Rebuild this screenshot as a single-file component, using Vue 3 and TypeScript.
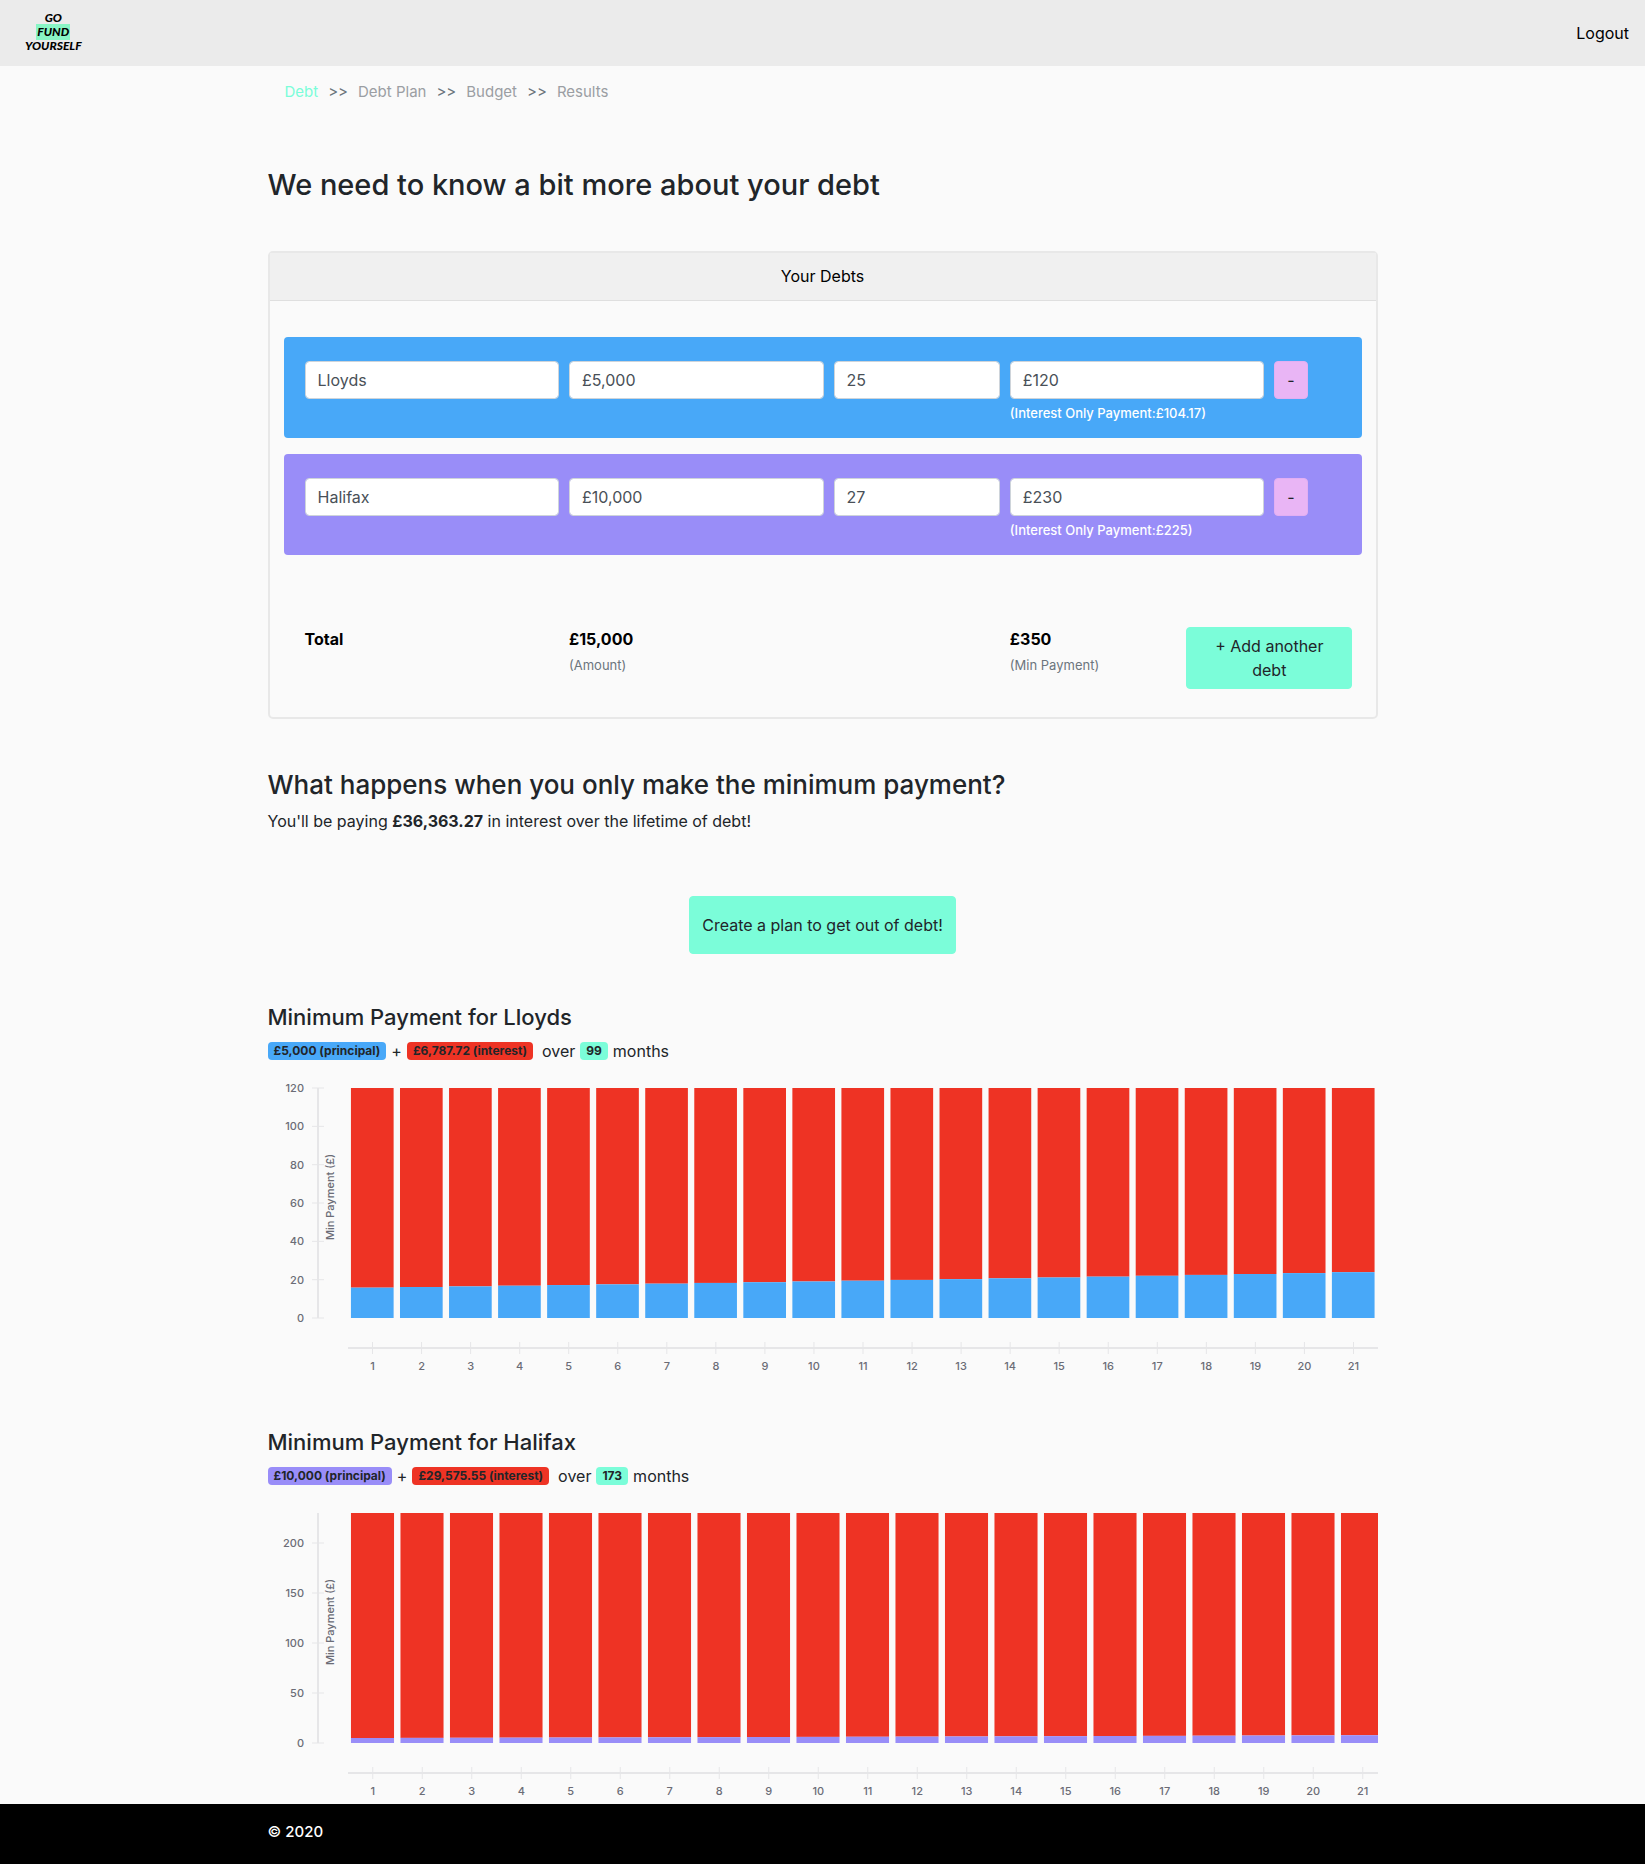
<script setup lang="ts">
import { computed, ref } from 'vue'

interface Debt {
  id: number
  name: string
  amount: string
  rate: string
  payment: string
  interestOnly: string
  color: string
}

interface Plan {
  id: number
  name: string
  principal: string
  interest: string
  months: number
  color: string
  balance: number
  annualRate: number
  payment: number
  tickStep: number
  // horizontal room given to each month in the chart
  pitch: number
}

const steps = ['Debt', 'Debt Plan', 'Budget', 'Results']

const debts = ref<Debt[]>([
  { id: 1, name: 'Lloyds', amount: '£5,000', rate: '25', payment: '£120', interestOnly: '£104.17', color: 'blue' },
  { id: 2, name: 'Halifax', amount: '£10,000', rate: '27', payment: '£230', interestOnly: '£225', color: 'purple' },
])

const plans: Plan[] = [
  { id: 1, name: 'Lloyds', principal: '£5,000', interest: '£6,787.72', months: 99, color: 'blue', balance: 5000, annualRate: 0.25, payment: 120, tickStep: 20, pitch: 1030 / 21 },
  { id: 2, name: 'Halifax', principal: '£10,000', interest: '£29,575.55', months: 173, color: 'purple', balance: 10000, annualRate: 0.27, payment: 230, tickStep: 50, pitch: 1039.5 / 21 },
]

const MONTHS = 21
const PLOT_LEFT = 80
const PLOT_TOP = 15
const PLOT_HEIGHT = 230
const PLOT_BOTTOM = PLOT_TOP + PLOT_HEIGHT
const AXIS_Y = PLOT_BOTTOM + 30

const charts = computed(() =>
  plans.map((plan) => {
    const scale = PLOT_HEIGHT / plan.payment
    const monthly = plan.annualRate / 12
    const first = plan.payment - plan.balance * monthly
    const bars = Array.from({ length: MONTHS }, (_, i) => {
      const height = first * Math.pow(1 + monthly, i) * scale
      return {
        month: i + 1,
        x: PLOT_LEFT + i * plan.pitch + plan.pitch * 0.06,
        width: plan.pitch * 0.87,
        center: PLOT_LEFT + (i + 0.5) * plan.pitch,
        split: PLOT_BOTTOM - height,
        height,
      }
    })
    const ticks: { value: number; y: number }[] = []
    for (let value = 0; value <= plan.payment; value += plan.tickStep) {
      ticks.push({ value, y: PLOT_BOTTOM - value * scale })
    }
    return { ...plan, bars, ticks }
  }),
)

function removeDebt(id: number) {
  debts.value = debts.value.filter((debt) => debt.id !== id)
}

function addDebt() {
  debts.value.push({
    id: Date.now(),
    name: '',
    amount: '',
    rate: '',
    payment: '',
    interestOnly: '£0',
    color: 'blue',
  })
}
</script>

<template>
  <div class="page">
    <header class="navbar">
      <a class="logo" href="#">
        <span>GO</span>
        <span class="logo-mark">FUND</span>
        <span>YOURSELF</span>
      </a>
      <a class="logout" href="#">Logout</a>
    </header>

    <main class="container">
      <nav class="steps" aria-label="Progress">
        <template v-for="(step, i) in steps" :key="step">
          <span v-if="i > 0" class="separator">&gt;&gt;</span>
          <a href="#" :class="['step', { active: i === 0 }]">{{ step }}</a>
        </template>
      </nav>

      <h1>We need to know a bit more about your debt</h1>

      <section class="card">
        <div class="card-header">Your Debts</div>
        <div class="card-body">
          <form v-for="debt in debts" :key="debt.id" :class="['debt', 'form-row', debt.color]" @submit.prevent>
            <input v-model="debt.name" class="field wide" type="text" aria-label="Name" />
            <input v-model="debt.amount" class="field wide" type="text" aria-label="Amount" />
            <input v-model="debt.rate" class="field narrow" type="text" aria-label="Interest rate" />
            <div class="wide">
              <input v-model="debt.payment" class="field" type="text" aria-label="Minimum payment" />
              <small class="hint">(Interest Only Payment:{{ debt.interestOnly }})</small>
            </div>
            <button class="remove" type="button" :aria-label="`Remove ${debt.name}`" @click="removeDebt(debt.id)">-</button>
          </form>

          <div class="totals form-row">
            <div class="wide"><strong>Total</strong></div>
            <div class="wide">
              <strong>£15,000</strong>
              <small>(Amount)</small>
            </div>
            <div class="narrow"></div>
            <div class="narrow">
              <strong>£350</strong>
              <small>(Min Payment)</small>
            </div>
            <button class="btn narrow" type="button" @click="addDebt">+ Add another debt</button>
          </div>
        </div>
      </section>

      <section class="summary">
        <h2>What happens when you only make the minimum payment?</h2>
        <p>You'll be paying <strong>£36,363.27</strong> in interest over the lifetime of debt!</p>
        <button class="btn create" type="button">Create a plan to get out of debt!</button>
      </section>

      <section v-for="chart in charts" :key="chart.id" class="plan">
        <h3>Minimum Payment for {{ chart.name }}</h3>
        <p class="breakdown">
          <span :class="['badge', chart.color]">{{ chart.principal }} (principal)</span>
          <span>+</span>
          <span class="badge red">{{ chart.interest }} (interest)</span>
          <span class="over">over</span>
          <span class="badge mint">{{ chart.months }}</span>
          <span>months</span>
        </p>
        <svg class="chart" viewBox="0 0 1110 306" role="img" :aria-label="`Minimum payment for ${chart.name}`">
          <g class="axis">
            <line class="axis-line" x1="50" x2="50" :y1="PLOT_TOP" :y2="PLOT_BOTTOM" />
            <g v-for="tick in chart.ticks" :key="tick.value">
              <line x1="44" x2="56" :y1="tick.y" :y2="tick.y" />
              <text x="36" :y="tick.y + 4" text-anchor="end">{{ tick.value }}</text>
            </g>
            <text transform="translate(66 124) rotate(-90)" text-anchor="middle">Min Payment (£)</text>
          </g>
          <g v-for="bar in chart.bars" :key="bar.month">
            <rect class="fill-red" :x="bar.x" :y="PLOT_TOP" :width="bar.width" :height="bar.split - PLOT_TOP" />
            <rect :class="`fill-${chart.color}`" :x="bar.x" :y="bar.split" :width="bar.width" :height="bar.height" />
          </g>
          <g class="axis">
            <line class="axis-line" :x1="PLOT_LEFT" x2="1110" :y1="AXIS_Y" :y2="AXIS_Y" />
            <g v-for="bar in chart.bars" :key="bar.month">
              <line :x1="bar.center" :x2="bar.center" :y1="AXIS_Y - 6" :y2="AXIS_Y + 6" />
              <text :x="bar.center" :y="AXIS_Y + 22" text-anchor="middle">{{ bar.month }}</text>
            </g>
          </g>
        </svg>
      </section>
    </main>

    <footer class="footer">
      <div class="container">© 2020</div>
    </footer>
  </div>
</template>

<style>
body {
  background: #fafafa;
}
</style>

<style scoped>
.page {
  min-height: 100vh;
  display: flex;
  flex-direction: column;
  font-family: Inter, 'Liberation Sans', sans-serif;
  font-size: 16px;
  line-height: 24px;
  color: #212529;
}

.page *,
.page {
  box-sizing: border-box;
}

h1,
h2,
h3,
p {
  margin: 0;
  font-weight: 500;
}

p {
  font-weight: 400;
}

a {
  text-decoration: none;
}

strong {
  font-weight: 700;
}

input,
button {
  font: inherit;
}

.navbar {
  display: flex;
  align-items: center;
  justify-content: space-between;
  height: 66px;
  padding: 0 16px 0 25px;
  background: #ebebeb;
}

.logo {
  display: flex;
  flex-direction: column;
  align-items: center;
  padding-bottom: 2px;
  font-family: Lato, sans-serif;
  font-size: 12px;
  font-weight: 900;
  font-style: italic;
  line-height: 12px;
  color: #000;
}

.logo-mark {
  padding: 2px 1px;
  background: #89f5c5;
}

.logout {
  color: #000;
}

.container {
  width: 100%;
  max-width: 1142px;
  margin: 0 auto;
  padding: 0 16px;
}

.steps {
  display: flex;
  gap: 10px;
  padding: 14px 17px;
  font-size: 15px;
  color: #6c757d;
}

.step {
  color: #9b9ea3;
}

.step.active {
  color: #7bfdd9;
}

h1 {
  margin: 47px 0 46px;
  font-size: 29px;
  line-height: 40px;
}

.card {
  border: 2px solid #e8e8e8;
  border-radius: 5px;
}

.card-header {
  padding: 11px 12px 12px;
  background: #f0f0f0;
  border-bottom: 1px solid #dfdfdf;
  color: #000;
  text-align: center;
}

.card-body {
  padding: 36px 14px 28px;
  color: #000;
}

.form-row {
  display: grid;
  grid-template-columns: repeat(12, 1fr);
  column-gap: 10px;
  align-items: start;
  padding-left: 21px;
  padding-right: 9px;
}

.wide {
  grid-column: span 3;
}

.narrow {
  grid-column: span 2;
}

.debt {
  margin-bottom: 16px;
  padding-top: 24px;
  padding-bottom: 15px;
  border-radius: 4px;
}

.field {
  display: block;
  width: 100%;
  height: 38px;
  padding: 6px 12px;
  border: 1px solid #ced4da;
  border-radius: 4px;
  background: #fff;
  background-clip: padding-box;
  color: #495057;
}

small {
  display: block;
  margin-top: 4px;
  font-size: 13px;
  line-height: 20px;
  color: #6c757d;
}

.hint {
  font-weight: 500;
  color: #fff;
}

.remove {
  justify-self: start;
  height: 38px;
  padding: 6px 12px;
  border: 1px solid #e2aff3;
  border-radius: 4px;
  background: #e9b5f5;
  color: #212529;
}

.totals {
  padding-top: 56px;
}

.btn {
  padding: 6px 12px;
  border: 1px solid #7bfdd9;
  border-radius: 4px;
  background: #7bfdd9;
  color: #212529;
}

.summary {
  display: flex;
  flex-direction: column;
  margin-top: 48px;
}

h2 {
  margin-bottom: 6px;
  font-size: 26px;
  line-height: 36px;
}

.create {
  align-self: center;
  margin-top: 63px;
  padding: 16px 12px;
}

.plan {
  margin-top: 47px;
}

h3 {
  margin-bottom: 6px;
  font-size: 22px;
  line-height: 32px;
}

.breakdown {
  display: flex;
  align-items: center;
  gap: 5px;
  margin-bottom: 10px;
}

.over {
  margin-left: 4px;
}

.badge {
  padding: 3px 6px;
  border-radius: 4px;
  font-size: 12px;
  font-weight: 700;
  line-height: 12px;
}

.blue {
  background: #48a8f8;
}

.purple {
  background: #998df8;
}

.red {
  background: #ee3324;
}

.mint {
  background: #7bfdd9;
}

.chart {
  display: block;
  width: 100%;
  height: auto;
}

.fill-red {
  fill: #ee3324;
}

.fill-blue {
  fill: #48a8f8;
}

.fill-purple {
  fill: #998df8;
}

.axis line {
  stroke: #e6e6e8;
  stroke-width: 1;
}

.axis .axis-line {
  stroke-width: 2;
}

.axis text {
  font-size: 11px;
  font-weight: 500;
  fill: #6b6c76;
}

.footer {
  margin-top: auto;
  padding: 16px 0 20px;
  background: #000;
  color: #fff;
  font-size: 15px;
  font-weight: 500;
}
</style>
